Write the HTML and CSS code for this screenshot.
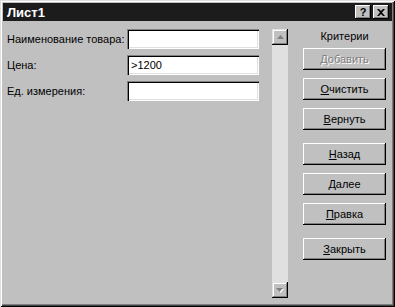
FILE: index.html
```html
<!DOCTYPE html>
<html lang="ru">
<head>
  <meta charset="UTF-8"/>
  <title>Лист1</title>
  <link rel="stylesheet" href="styles.css">
</head>
<body>

  <div class="window">
    <div class="titlebar">
      <span class="title">Лист1</span>
      <div class="title-buttons">
        <button class="tbtn">?</button>
        <button class="tbtn">
          <svg width="8" height="7" viewBox="0 0 8 7"><path d="M0 0h2l2 2 2-2h2L5 3.5 8 7H6L4 5 2 7H0l3-3.5z" fill="#000"/></svg>
        </button>
      </div>
    </div>

    <div class="content">
      <div class="form">
        <div class="row">
          <label class="lbl">Наименование товара:</label>
          <div class="field"></div>
        </div>
        <div class="row">
          <label class="lbl">Цена:</label>
          <div class="field">&gt;1200</div>
        </div>
        <div class="row">
          <label class="lbl">Ед. измерения:</label>
          <div class="field"></div>
        </div>
      </div>

      <div class="scrollbar">
        <div class="sbtn">
          <svg width="7" height="4" viewBox="0 0 7 4"><path d="M3.5 0L7 4H0z" fill="#808080"/></svg>
        </div>
        <div class="track"></div>
        <div class="sbtn">
          <svg width="8" height="5" viewBox="0 0 8 5"><path d="M1 1h7L4.5 5z" fill="#fff"/><path d="M0 0h7L3.5 4z" fill="#808080"/></svg>
        </div>
      </div>

      <div class="actions">
        <div class="caption">Критерии</div>
        <button class="btn disabled">Добавить</button>
        <button class="btn"><u>О</u>чистить</button>
        <button class="btn"><u>В</u>ернуть</button>
        <button class="btn gap"><u>Н</u>азад</button>
        <button class="btn"><u>Д</u>алее</button>
        <button class="btn"><u>П</u>равка</button>
        <button class="btn gap"><u>З</u>акрыть</button>
      </div>
    </div>
  </div>

</body>
</html>
```

FILE: styles.css
```css
body {
  margin: 0;
  background: #c0c0c0;
  font-family: "Liberation Sans", Arial, sans-serif;
  font-size: 11px;
  color: #000;
}

.window {
  width: 395px;
  height: 307px;
  box-sizing: border-box;
  padding: 3px;
  background: #c0c0c0;
  box-shadow: inset 1px 1px #dfdfdf, inset -1px -1px #000, inset 2px 2px #fff, inset -2px -2px #404040, inset -3px -3px #808080;
}

.titlebar {
  height: 18px;
  background: #1c1c1c;
  display: flex;
  align-items: center;
  justify-content: space-between;
  padding: 0 3px 0 4px;
}

.title {
  color: #fff;
  font-weight: bold;
  font-size: 13px;
}

.title-buttons {
  display: flex;
  gap: 2px;
}

.tbtn {
  width: 16px;
  height: 14px;
  padding: 0;
  border: none;
  background: #c0c0c0;
  font-family: "Liberation Sans", Arial, sans-serif;
  font-weight: bold;
  font-size: 11px;
  line-height: 14px;
  display: flex;
  align-items: center;
  justify-content: center;
  box-shadow: inset -1px -1px #000, inset 1px 1px #fff, inset -2px -2px #808080;
}

.content {
  display: flex;
  padding: 8px 0 0 4px;
}

.form {
  display: flex;
  flex-direction: column;
  gap: 6px;
  width: 252px;
}

.row {
  display: flex;
  align-items: center;
  height: 20px;
}

.lbl {
  width: 120px;
}

.field {
  width: 132px;
  height: 20px;
  box-sizing: border-box;
  background: #fff;
  padding: 3px 4px;
  line-height: 14px;
  box-shadow: inset 1px 1px #808080, inset 2px 2px #000, inset -1px -1px #fff, inset -2px -2px #dfdfdf;
}

.scrollbar {
  margin-left: 13px;
  width: 16px;
  height: 269px;
  display: flex;
  flex-direction: column;
}

.sbtn {
  height: 16px;
  background: #c0c0c0;
  display: flex;
  align-items: center;
  justify-content: center;
  box-shadow: inset -1px -1px #000, inset 1px 1px #dfdfdf, inset -2px -2px #808080, inset 2px 2px #fff;
}

.track {
  flex: 1;
  background: #e0e0e0;
}

.actions {
  margin-left: 15px;
  width: 83px;
  display: flex;
  flex-direction: column;
  gap: 8px;
}

.caption {
  height: 11px;
  text-align: center;
  line-height: 14px;
}

.btn {
  height: 22px;
  padding: 0;
  border: none;
  background: #c0c0c0;
  font-family: "Liberation Sans", Arial, sans-serif;
  font-size: 11px;
  color: #000;
  box-shadow: inset -1px -1px #000, inset 1px 1px #fff, inset -2px -2px #808080;
}

.btn.disabled {
  color: #808080;
  text-shadow: 1px 1px #fff;
}

.btn.gap {
  margin-top: 5px;
}
```
